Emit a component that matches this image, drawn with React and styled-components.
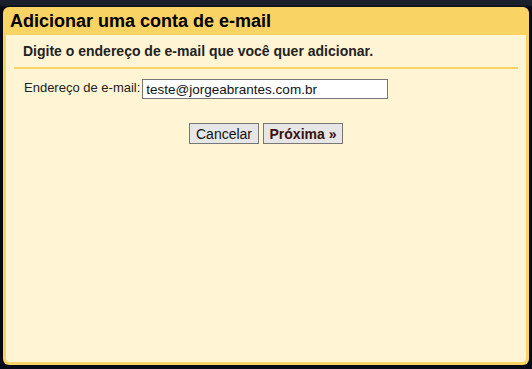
import React, { useState } from "react";
import styled, { createGlobalStyle } from "styled-components";

const GlobalStyle = createGlobalStyle`
  html, body {
    margin: 0;
    padding: 0;
    background: #070b17;
    font-family: Arial, "Liberation Sans", sans-serif;
  }
`;

const Page = styled.div`
  width: 532px;
  height: 369px;
  box-sizing: border-box;
  padding: 7px 3px 4px 3px;
  background: linear-gradient(#1b1e2b 0, #1b1e2b 5px, #070b17 7px);
  display: flex;
`;

const Dialog = styled.div`
  flex: 1;
  display: flex;
  flex-direction: column;
  background: #fad365;
  border-radius: 6px;
  padding: 0 3px 3px 3px;
`;

const Header = styled.h1`
  margin: 0;
  height: 28px;
  display: flex;
  align-items: center;
  padding-left: 4px;
  font-size: 18px;
  font-weight: bold;
  color: #000;
`;

const Body = styled.div`
  flex: 1;
  background: #fff5d5;
  border-radius: 0 0 4px 4px;
  padding: 0 8px;
`;

const Intro = styled.p`
  margin: 0;
  padding: 8px 0 8px 9px;
  font-size: 14px;
  font-weight: bold;
  color: #222;
  border-bottom: 2px solid #fad365;
`;

const Row = styled.div`
  display: flex;
  align-items: flex-start;
  margin-top: 10px;
  padding-left: 10px;
`;

const Label = styled.label`
  font-size: 13px;
  color: #222;
  margin-right: 2px;
  line-height: 16px;
  padding-top: 1px;
`;

const Input = styled.input`
  width: 246px;
  height: 20px;
  box-sizing: border-box;
  border: 1px solid #777;
  padding: 0 3px;
  font-size: 13.5px;
  font-family: Arial, "Liberation Sans", sans-serif;
  color: #111;
  background: #fff;
  outline: none;
`;

const Actions = styled.div`
  display: flex;
  justify-content: center;
  gap: 4px;
  margin-top: 24px;
`;

const Button = styled.button`
  height: 21px;
  padding: 0;
  box-sizing: border-box;
  border: 1px solid #777;
  border-radius: 0;
  background: #e6e6e6;
  font-family: Arial, "Liberation Sans", sans-serif;
  font-size: 14px;
  white-space: nowrap;
  font-weight: ${(p) => (p.$primary ? "bold" : "normal")};
  color: ${(p) => (p.$primary ? "#3a1010" : "#111")};
  width: ${(p) => p.$w}px;
`;

const App = () => {
  const [email, setEmail] = useState("teste@jorgeabrantes.com.br");

  return (
    <>
      <GlobalStyle />
      <Page>
        <Dialog>
          <Header>Adicionar uma conta de e-mail</Header>
          <Body>
            <Intro>Digite o endereço de e-mail que você quer adicionar.</Intro>
            <Row>
              <Label htmlFor="email">Endereço de e-mail:</Label>
              <Input
                id="email"
                value={email}
                onChange={(e) => setEmail(e.target.value)}
              />
            </Row>
            <Actions>
              <Button $w={70}>Cancelar</Button>
              <Button $primary $w={80}>
                Próxima »
              </Button>
            </Actions>
          </Body>
        </Dialog>
      </Page>
    </>
  );
};

export default App;
